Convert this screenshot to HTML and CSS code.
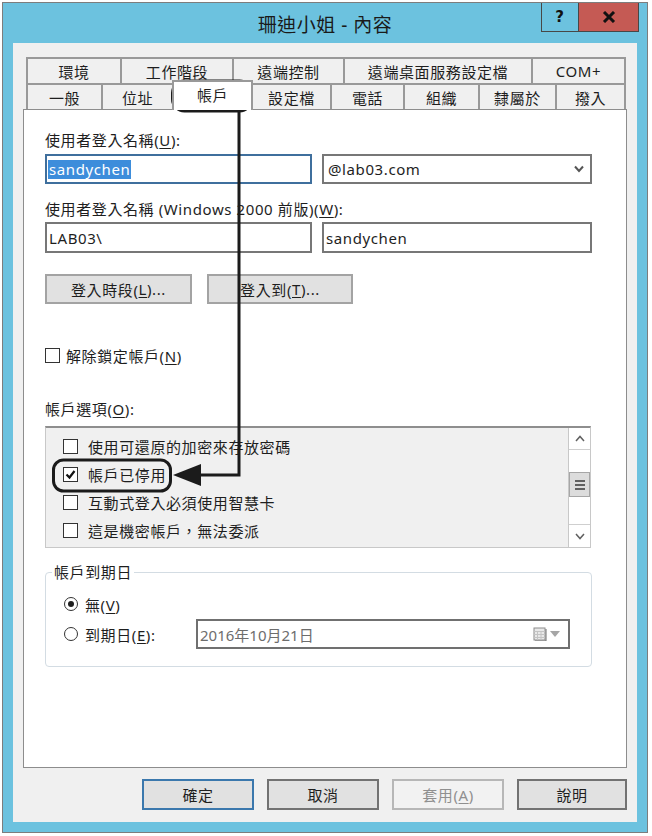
FILE: index.html
```html
<!DOCTYPE html>
<html lang="zh-Hant">
<head>
    <meta charset="UTF-8">
    <meta name="viewport" content="width=device-width, initial-scale=1.0">
    <title>珊迪小姐 - 內容</title>
    <link rel="stylesheet" href="styles.css">
</head>
<body>

    <div class="window">
        <div class="titlebar">
            <div></div>
            <div class="title">珊迪小姐 - 內容</div>
            <div class="caption-btns">
                <div class="cap-btn help">?</div>
                <div class="cap-btn close">
                    <svg width="14" height="12" viewBox="0 0 14 12">
                        <path d="M2 1 L12 11 M12 1 L2 11" stroke="#111" stroke-width="3"/>
                    </svg>
                </div>
            </div>
        </div>

        <div class="panel">
            <!-- 分頁 -->
            <div class="tabs">
                <div class="tab-row top">
                    <div class="tab">環境</div>
                    <div class="tab">工作階段</div>
                    <div class="tab">遠端控制</div>
                    <div class="tab">遠端桌面服務設定檔</div>
                    <div class="tab">COM+</div>
                </div>
                <div class="tab-row bottom">
                    <div class="tab">一般</div>
                    <div class="tab">位址</div>
                    <div class="tab active">帳戶</div>
                    <div class="tab">設定檔</div>
                    <div class="tab">電話</div>
                    <div class="tab">組織</div>
                    <div class="tab">隸屬於</div>
                    <div class="tab">撥入</div>
                </div>
            </div>

            <div class="sheet">
                <div class="label">使用者登入名稱(<u>U</u>):</div>
                <div class="field-row">
                    <div class="field focus"><span class="selected">sandychen</span></div>
                    <div class="field combo">
                        <span>@lab03.com</span>
                        <svg width="10" height="8" viewBox="0 0 10 8">
                            <path d="M1 1.5 L5 6 L9 1.5" fill="none" stroke="#555" stroke-width="2"/>
                        </svg>
                    </div>
                </div>

                <div class="label second">使用者登入名稱 (Windows 2000 前版)(<u>W</u>):</div>
                <div class="field-row tight">
                    <div class="field">LAB03\</div>
                    <div class="field">sandychen</div>
                </div>

                <div class="btn-row">
                    <div class="btn wide">登入時段(<u>L</u>)...</div>
                    <div class="btn">登入到(<u>T</u>)...</div>
                </div>

                <div class="check-row">
                    <span class="check"></span>
                    <span>解除鎖定帳戶(<u>N</u>)</span>
                </div>

                <div class="label options">帳戶選項(<u>O</u>):</div>
                <div class="listbox">
                    <div class="list-items">
                        <div class="list-item"><span class="check"></span>使用可還原的加密來存放密碼</div>
                        <div class="list-item">
                            <span class="check">
                                <svg width="13" height="13" viewBox="0 0 13 13">
                                    <path d="M2.5 6.5 L5.5 9.5 L10.5 3" fill="none" stroke="#111" stroke-width="2.2"/>
                                </svg>
                            </span>帳戶已停用
                        </div>
                        <div class="list-item"><span class="check"></span>互動式登入必須使用智慧卡</div>
                        <div class="list-item"><span class="check"></span>這是機密帳戶，無法委派</div>
                    </div>
                    <div class="scrollbar">
                        <div class="sb-arrow up">
                            <svg width="10" height="7" viewBox="0 0 10 7"><path d="M1 6 L5 1.5 L9 6" fill="none" stroke="#606060" stroke-width="1.5"/></svg>
                        </div>
                        <div class="sb-track first"></div>
                        <div class="sb-thumb"><span></span><span></span><span></span></div>
                        <div class="sb-track second"></div>
                        <div class="sb-arrow down">
                            <svg width="10" height="7" viewBox="0 0 10 7"><path d="M1 1 L5 5.5 L9 1" fill="none" stroke="#606060" stroke-width="1.5"/></svg>
                        </div>
                    </div>
                </div>

                <fieldset class="group">
                    <legend>帳戶到期日</legend>
                    <div class="group-body">
                        <div class="radio-row">
                            <span class="radio on"></span>
                            <span>無(<u>V</u>)</span>
                        </div>
                        <div class="date-row">
                            <div class="radio-row">
                                <span class="radio"></span>
                                <span>到期日(<u>E</u>):</span>
                            </div>
                            <div class="datebox">
                                <span>2016年10月21日</span>
                                <span class="date-icons">
                                    <svg width="14" height="14" viewBox="0 0 14 14">
                                        <rect x="1" y="1" width="11" height="12" fill="#e9e9e9" stroke="#8c8c8c"/>
                                        <path d="M1 4.5 H12 M1 7.5 H12 M1 10.5 H12 M4.5 4.5 V13 M8 4.5 V13" stroke="#c4c4c4"/>
                                        <path d="M13 2 V14 H2" fill="none" stroke="#6e6e6e"/>
                                    </svg>
                                    <svg width="10" height="6" viewBox="0 0 10 6"><path d="M0 0 H10 L5 6 Z" fill="#a6a6a6"/></svg>
                                </span>
                            </div>
                        </div>
                    </div>
                </fieldset>
            </div>

            <div class="actions">
                <div class="action default">確定</div>
                <div class="action">取消</div>
                <div class="action disabled">套用(<u>A</u>)</div>
                <div class="action last">說明</div>
            </div>
        </div>
    </div>

    <!-- 書中的標示框與箭頭 -->
    <svg class="marks" width="652" height="836" viewBox="0 0 652 836">
        <rect x="172.5" y="81" width="79" height="30" rx="12" fill="none" stroke="#1b1b1b" stroke-width="3"/>
        <path d="M239 111 V475 H198" fill="none" stroke="#1b1b1b" stroke-width="3"/>
        <path d="M173 475 L201 464 L201 486 Z" fill="#1b1b1b"/>
        <rect x="53.5" y="460" width="117" height="31" rx="10" fill="none" stroke="#1b1b1b" stroke-width="3"/>
    </svg>

</body>
</html>
```

FILE: styles.css
```css
* {
    box-sizing: border-box;
}

body {
    margin: 0;
    width: 652px;
    height: 836px;
    overflow: hidden;
    position: relative;
    background: #fff;
    font-family: "Noto Sans", "Noto Sans CJK TC", sans-serif;
    font-size: 15px;
    letter-spacing: 0.6px;
    color: #1e1e1e;
}

u {
    text-decoration-thickness: 1px;
    text-underline-offset: 2px;
}

/* 視窗外框 */
.window {
    margin: 2px 0 0 2px;
    width: 646px;
    height: 831px;
    border: 1px solid #7d7d7d;
    background: #6cc2df;
    padding: 0 10px 10px 10px;
}

.titlebar {
    height: 40px;
    display: grid;
    grid-template-columns: 1fr auto 1fr;
}

.title {
    align-self: center;
    padding-top: 2px;
    font-size: 19px;
    letter-spacing: 0.5px;
    color: #1a1a1a;
}

.caption-btns {
    justify-self: end;
    display: flex;
    height: 29px;
    margin-right: -2px;
    border: 1px solid #474747;
    border-top: none;
}

.cap-btn {
    display: flex;
    align-items: center;
    justify-content: center;
}

.cap-btn.help {
    width: 37px;
    border-right: 1px solid #474747;
    font-family: "DejaVu Sans", sans-serif;
    font-weight: bold;
    font-size: 15px;
    color: #111;
}

.cap-btn.close {
    width: 59px;
    background: #c55a54;
}

/* 內容面板 */
.panel {
    height: 779px;
    background: #f0f0f0;
    padding: 14px 10px 12px 10px;
}

.tabs {
    margin: 0 1px 0 3px;
}

.tab-row {
    display: grid;
    height: 26px;
}

.tab-row.top {
    grid-template-columns: 94px 112px 111px 188px 95px;
}

.tab-row.bottom {
    grid-template-columns: 75px 71px 81px 77px 73px 75px 77px 71px;
}

.tab {
    display: flex;
    align-items: center;
    justify-content: center;
    background: #f0f0f0;
    border-top: 2px solid #999;
    border-left: 2px solid #999;
    color: #1e1e1e;
}

.tab:last-child {
    border-right: 2px solid #999;
}

.tab.active {
    position: relative;
    z-index: 1;
    margin-top: -3px;
    margin-bottom: -1px;
    background: #fff;
    align-items: flex-start;
    padding-top: 2px;
    border-right: 2px solid #999;
}

.tab.active + .tab {
    border-left: none;
}

.sheet {
    height: 659px;
    background: #fff;
    border: 1px solid #8d8d8d;
    padding: 20px 0 0 21px;
}

.label {
    line-height: 20px;
}

.label.second {
    margin-top: 15px;
}

.label.options {
    margin-top: 34px;
}

.field-row {
    display: grid;
    grid-template-columns: 267px 270px;
    column-gap: 10px;
    height: 30px;
    margin-top: 4px;
}

.field-row.tight {
    height: 31px;
    margin-top: 3px;
}

.field {
    display: flex;
    align-items: center;
    padding-left: 2px;
    border: 2px solid #777;
    background: #fff;
}

.field.focus {
    border-color: #3f6f9d;
    padding-left: 1px;
}

.selected {
    background: #3d8ddb;
    color: #fff;
    line-height: 19px;
    padding: 0 1px;
}

.field.combo {
    justify-content: space-between;
    padding: 0 6px 0 4px;
}

.btn-row {
    display: flex;
    gap: 15px;
    margin-top: 21px;
}

.btn {
    width: 146px;
    height: 30px;
    display: flex;
    align-items: center;
    justify-content: center;
    background: #e1e1e1;
    border: 2px solid #a3a3a3;
}

.btn.wide {
    width: 147px;
}

.check {
    width: 15px;
    height: 15px;
    flex: none;
    display: flex;
    align-items: center;
    justify-content: center;
    border: 1px solid #333;
    background: #fff;
}

.check-row {
    display: flex;
    align-items: center;
    gap: 6px;
    height: 20px;
    margin-top: 41px;
}

/* 帳戶選項清單 */
.listbox {
    display: flex;
    width: 546px;
    height: 122px;
    margin-top: 7px;
    background: #f0f0f0;
    border: 1px solid #c8c8c8;
    border-top: 2px solid #8e8e8e;
}

.list-items {
    flex: 1;
    padding: 4px 0 0 17px;
}

.list-item {
    display: flex;
    align-items: center;
    gap: 10px;
    height: 28px;
}

.scrollbar {
    width: 22px;
    display: flex;
    flex-direction: column;
    background: #fff;
    border-left: 1px solid #c8c8c8;
}

.sb-arrow {
    height: 22px;
    display: flex;
    align-items: center;
    justify-content: center;
    border-bottom: 1px solid #cfcfcf;
}

.sb-arrow.down {
    height: 23px;
    border-bottom: none;
    border-top: 1px solid #cfcfcf;
}

.sb-track.first {
    height: 22px;
}

.sb-track.second {
    height: 27px;
}

.sb-thumb {
    height: 26px;
    display: flex;
    flex-direction: column;
    align-items: center;
    justify-content: center;
    gap: 2px;
    background: #dcdcdc;
    border: 1px solid #a6a6a6;
}

.sb-thumb span {
    width: 10px;
    height: 2px;
    background: #606060;
}

/* 帳戶到期日 */
.group {
    width: 547px;
    margin: 14px 0 0 0;
    padding: 0 0 17px 6px;
    border: 1px solid #d3dce3;
    border-radius: 4px;
}

.group legend {
    padding: 0 2px;
    line-height: 20px;
}

.group-body {
    padding: 12px 0 0 12px;
}

.radio-row {
    display: flex;
    align-items: center;
    gap: 7px;
    height: 20px;
}

.date-row {
    display: grid;
    grid-template-columns: 132px 374px;
    align-items: center;
    height: 30px;
    margin-top: 5px;
}

.radio {
    width: 14px;
    height: 14px;
    flex: none;
    border-radius: 50%;
    border: 1px solid #333;
    background: #fff;
    display: flex;
    align-items: center;
    justify-content: center;
}

.radio.on::after {
    content: "";
    width: 6px;
    height: 6px;
    border-radius: 50%;
    background: #1e1e1e;
}

.datebox {
    height: 30px;
    display: flex;
    align-items: center;
    justify-content: space-between;
    padding: 0 8px 0 2px;
    border: 2px solid #707070;
    color: #6d6d6d;
    letter-spacing: 0;
}

.date-icons {
    display: flex;
    align-items: center;
    gap: 3px;
}

/* 底部按鈕 */
.actions {
    display: flex;
    justify-content: flex-end;
    gap: 13px;
    margin-top: 11px;
}

.action {
    width: 112px;
    height: 31px;
    display: flex;
    align-items: center;
    justify-content: center;
    background: #e1e1e1;
    border: 2px solid #727272;
}

.action.last {
    width: 110px;
}

.action.default {
    border-color: #3b78ad;
}

.action.disabled {
    background: #f2f2f2;
    border-color: #b7b7b7;
    color: #8f8f8f;
}

.marks {
    position: absolute;
    top: 0;
    left: 0;
    pointer-events: none;
}
```
